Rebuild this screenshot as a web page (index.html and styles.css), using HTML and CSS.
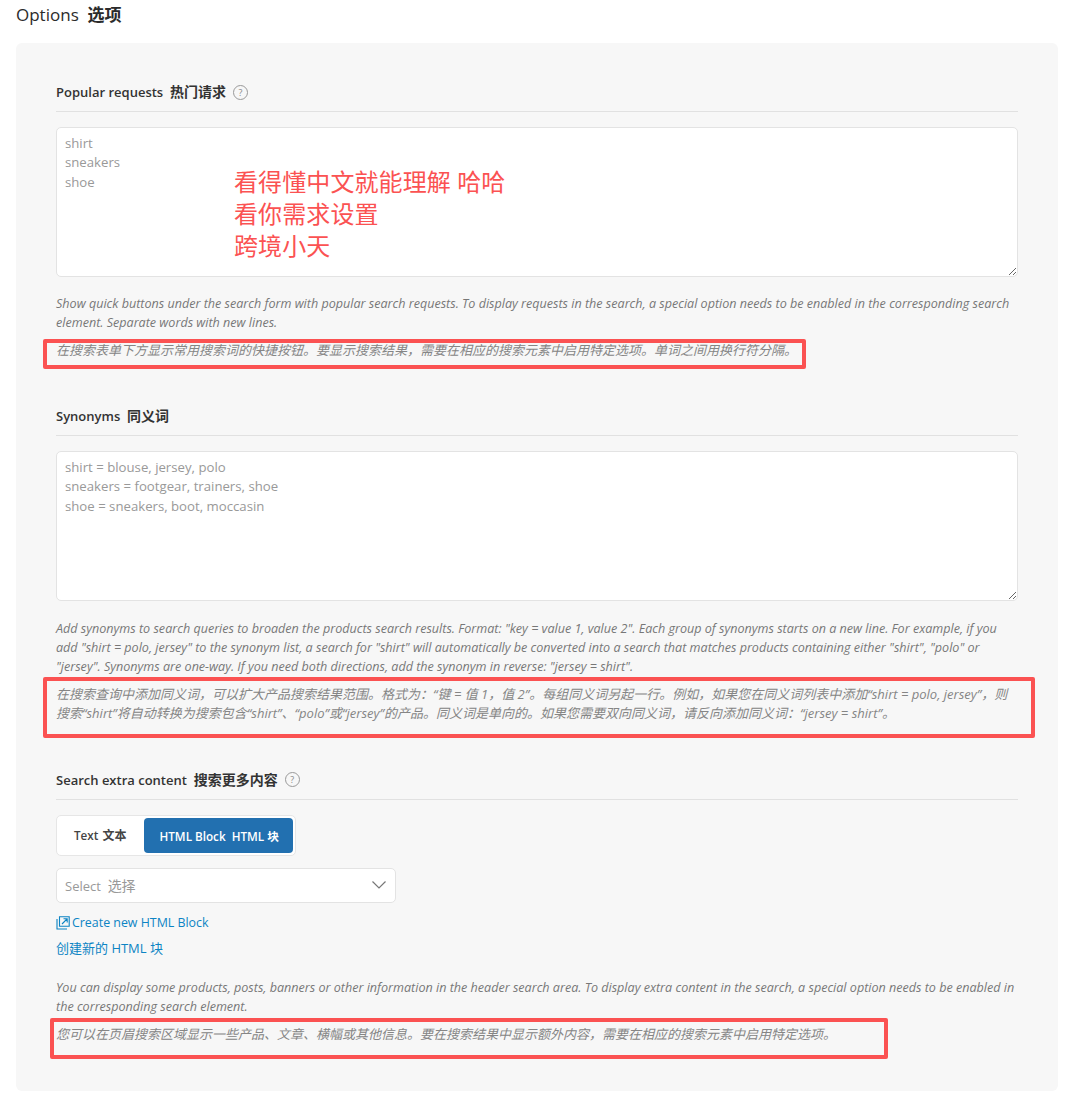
FILE: index.html
```html
<!DOCTYPE html>
<html lang="en">
<head>
    <meta charset="UTF-8">
    <meta name="viewport" content="width=device-width, initial-scale=1.0">
    <title>Options</title>
    <link rel="stylesheet" href="styles.css">
</head>
<body>
    <h1 class="page-title">Options&nbsp; <b>选项</b></h1>

    <div class="card">
        <section class="option first">
            <h2 class="option-title">
                <span>Popular requests&nbsp; <b>热门请求</b></span>
                <span class="hint">?</span>
            </h2>
            <textarea class="field" placeholder="shirt&#10;sneakers&#10;shoe"></textarea>
            <p class="desc">Show quick buttons under the search form with popular search requests. To display requests in the search, a special option needs to be enabled in the corresponding search element. Separate words with new lines.</p>
            <p class="desc zh">在搜索表单下方显示常用搜索词的快捷按钮。要显示搜索结果，需要在相应的搜索元素中启用特定选项。单词之间用换行符分隔。</p>
        </section>

        <section class="option synonyms">
            <h2 class="option-title">
                <span>Synonyms&nbsp; <b>同义词</b></span>
            </h2>
            <textarea class="field" placeholder="shirt = blouse, jersey, polo&#10;sneakers = footgear, trainers, shoe&#10;shoe = sneakers, boot, moccasin"></textarea>
            <p class="desc">Add synonyms to search queries to broaden the products search results. Format: "key = value 1, value 2". Each group of synonyms starts on a new line. For example, if you add "shirt = polo, jersey" to the synonym list, a search for "shirt" will automatically be converted into a search that matches products containing either "shirt", "polo" or "jersey". Synonyms are one-way. If you need both directions, add the synonym in reverse: "jersey = shirt".</p>
            <p class="desc zh">在搜索查询中添加同义词，可以扩大产品搜索结果范围。格式为：“键 = 值 1，值 2”。每组同义词另起一行。例如，如果您在同义词列表中添加“shirt = polo, jersey”，则<br>搜索“shirt”将自动转换为搜索包含“shirt”、“polo”或“jersey”的产品。同义词是单向的。如果您需要双向同义词，请反向添加同义词：“jersey = shirt”。</p>
        </section>

        <section class="option extra">
            <h2 class="option-title">
                <span>Search extra content&nbsp; <b>搜索更多内容</b></span>
                <span class="hint">?</span>
            </h2>
            <div class="switch">
                <span class="switch-item">Text&nbsp; <b>文本</b></span>
                <span class="switch-item active">HTML Block&nbsp; HTML 块</span>
            </div>
            <div class="select">
                <span>Select&nbsp; <span class="select-zh">选择</span></span>
                <svg width="16" height="10" viewBox="0 0 16 10" fill="none" stroke="#777" stroke-width="1.2"><path d="M1.5 1.5 8 8l6.5-6.5"/></svg>
            </div>
            <a class="create-link" href="#">
                <svg width="14" height="14" viewBox="0 0 14 14" fill="none" stroke="#0c84c4" stroke-width="1.1"><path d="M1 3v10h10M3.5 .8h9.7v9.4H3.5zM6 8l5-5M7.5 2.8h3.7v3.7"/></svg>
                Create new HTML Block
            </a>
            <a class="create-link zh-link" href="#">创建新的 HTML 块</a>
            <p class="desc">You can display some products, posts, banners or other information in the header search area. To display extra content in the search, a special option needs to be enabled in the corresponding search element.</p>
            <p class="desc zh">您可以在页眉搜索区域显示一些产品、文章、横幅或其他信息。要在搜索结果中显示额外内容，需要在相应的搜索元素中启用特定选项。</p>
        </section>
    </div>

    <!-- annotations drawn on top of the screenshot -->
    <div class="note">看得懂中文就能理解 哈哈<br>看你需求设置<br>跨境小天</div>
    <div class="mark mark-1"></div>
    <div class="mark mark-2"></div>
    <div class="mark mark-3"></div>
</body>
</html>
```

FILE: styles.css
```css
body {
    margin: 0;
    background-color: #fff;
    color: #333;
    font-family: "Open Sans", "Noto Sans CJK SC", sans-serif;
    font-size: 13px;
    position: relative;
    height: 1112px;
    overflow: hidden;
}

b {
    font-weight: 700;
}

.page-title {
    margin: 0;
    padding: 4px 16px 0;
    font-size: 17px;
    line-height: 22px;
    font-weight: 500;
    color: #2b2b2b;
}

.card {
    box-sizing: border-box;
    margin: 17px 9px 0 16px;
    height: 1048px;
    padding: 0 40px;
    background-color: #f7f7f7;
    border-radius: 6px;
}

.option {
    padding-top: 45px;
}

.option.first {
    padding-top: 39px;
}

.option.extra {
    padding-top: 46px;
}

.option-title {
    display: flex;
    align-items: center;
    gap: 7px;
    margin: 0 0 15px;
    padding-bottom: 9px;
    height: 20px;
    border-bottom: 1px solid #e1e1e1;
    font-size: 13px;
    line-height: 20px;
    font-weight: 600;
    color: #333;
    white-space: pre;
}

.option-title b {
    font-size: 14px;
}

.hint {
    box-sizing: border-box;
    width: 15px;
    height: 15px;
    border: 1px solid #999;
    border-radius: 50%;
    color: #888;
    font-size: 9px;
    font-weight: 400;
    line-height: 13px;
    text-align: center;
}

.field {
    display: block;
    box-sizing: border-box;
    width: 100%;
    height: 150px;
    padding: 5.7px 8px;
    margin: 0;
    border: 1px solid #e3e3e3;
    border-radius: 5px;
    background: #fff;
    font: 13.2px/19.5px "Open Sans", "Noto Sans CJK SC", sans-serif;
}

.synonyms .field {
    padding-top: 6.2px;
}

.field::placeholder {
    color: #999;
    opacity: 1;
}

.desc {
    margin: 17px 0 0;
    font-size: 12.57px;
    line-height: 19px;
    font-style: italic;
    color: #777;
}

.synonyms .field + .desc {
    margin-top: 18px;
}

.desc.zh {
    margin-top: 9px;
    font-size: 13px;
    line-height: 19.5px;
    color: #858585;
}

.switch {
    display: flex;
    width: fit-content;
    box-sizing: border-box;
    height: 41px;
    padding: 2px;
    background: #fff;
    border: 1px solid #e6e6e6;
    border-radius: 5px;
}

.switch-item {
    display: flex;
    align-items: center;
    padding: 0 18px 0 15px;
    font-size: 11.7px;
    font-weight: 600;
    word-spacing: -1px;
    color: #444;
    white-space: pre;
}

.switch-item b {
    font-size: 12px;
}

.switch-item.active {
    padding: 0 14px 0 15px;
    background-color: #2270b0;
    color: #fff;
    word-spacing: 0;
    border-radius: 4px;
}

.select {
    display: flex;
    align-items: center;
    justify-content: space-between;
    box-sizing: border-box;
    width: 340px;
    height: 35px;
    margin-top: 12px;
    padding: 0 8px;
    background: #fff;
    border: 1px solid #e3e3e3;
    border-radius: 5px;
    color: #999;
}

.select-zh {
    font-size: 14px;
}

.create-link {
    display: flex;
    align-items: center;
    gap: 2px;
    margin-top: 10px;
    height: 20px;
    color: #0c84c4;
    font-size: 12.4px;
    text-decoration: none;
}

.create-link.zh-link {
    margin-top: 5px;
    margin-bottom: 20px;
    font-size: 13px;
}

.mark {
    position: absolute;
    box-sizing: border-box;
    border: 4px solid #fb5252;
    border-radius: 2px;
}

.mark-1 {
    left: 43px;
    top: 339px;
    width: 763px;
    height: 30px;
}

.mark-2 {
    left: 43px;
    top: 677px;
    width: 992px;
    height: 61px;
}

.mark-3 {
    left: 50px;
    top: 1018px;
    width: 838px;
    height: 41px;
}

.note {
    position: absolute;
    left: 234px;
    top: 166px;
    color: #fb5252;
    font-size: 24px;
    letter-spacing: .1px;
    line-height: 32px;
}
```
